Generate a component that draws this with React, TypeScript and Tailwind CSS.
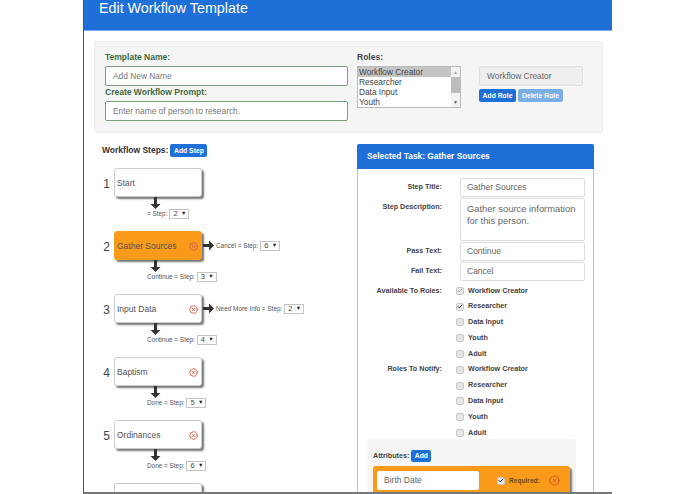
import { Check, CircleX } from 'lucide-react';

const font = { fontFamily: '"Liberation Sans", Arial, sans-serif' };

const steps = [
  { num: 1, title: 'Start', pass: '', passStep: 2 },
  { num: 2, title: 'Gather Sources', pass: 'Continue', passStep: 3, fail: 'Cancel', failStep: 6, active: true, removable: true },
  { num: 3, title: 'Input Data', pass: 'Continue', passStep: 4, fail: 'Need More Info', failStep: 2, removable: true },
  { num: 4, title: 'Baptism', pass: 'Done', passStep: 5, removable: true },
  { num: 5, title: 'Ordinances', pass: 'Done', passStep: 6, removable: true },
  { num: 6, title: '', pass: '', passStep: 0 },
];

function MiniSelect({ value }: { value: number }) {
  return (
    <span className="flex h-[10px] w-[20px] items-center justify-between border border-[#c4c4c4] bg-white pl-[3px] pr-[2px] text-[7.5px] leading-none text-[#444444]">
      {value}
      <span className="text-[5.5px] text-[#222222]">▼</span>
    </span>
  );
}

function ArrowDown() {
  return (
    <svg width="11" height="12" viewBox="0 0 11 12" className="block">
      <path d="M4 0h3v7h3.5L5.5 12 .5 7H4z" fill="#333333" />
    </svg>
  );
}

function ArrowRight() {
  return (
    <svg width="11" height="11" viewBox="0 0 11 11" className="block">
      <path d="M0 4h6V.5l5 5-5 5V7H0z" fill="#333333" />
    </svg>
  );
}

function Step({ step }: { step: (typeof steps)[number] }) {
  return (
    <div className="flex h-[63px] shrink-0">
      <div className="w-[12px] pr-[4px] pt-[10px] text-right text-[12px] leading-[12px] text-[#444444]">{step.num}</div>
      <div className="flex flex-col">
        <div className="flex items-center">
          <div
            className={`flex h-[29px] w-[88px] items-center justify-between rounded-[3px] border pl-[2px] pr-[3px] pt-[1px] text-[8.5px] text-[#555555] shadow-[2px_2px_2px_#777777] ${
              step.active ? 'border-[#f79a1e] bg-[#f99a1a]' : 'border-[#cccccc] bg-white'
            }`}
          >
            <span>{step.title}</span>
            {step.removable && <CircleX size={9} strokeWidth={2.5} className="text-[#d9604f]" />}
          </div>
          {step.fail && (
            <div className="ml-[1px] flex items-center gap-[2px]">
              <ArrowRight />
              <span className="text-[6.4px] text-[#555555]">{step.fail} = Step:</span>
              <MiniSelect value={step.failStep!} />
            </div>
          )}
        </div>
        {step.passStep > 0 && (
          <>
            <div className="ml-[36px]">
              <ArrowDown />
            </div>
            <div className="ml-[33px] flex items-center gap-[2px]">
              <span className="text-[6.4px] leading-[10px] text-[#555555]">{step.pass ? `${step.pass} = Step:` : '= Step:'}</span>
              <MiniSelect value={step.passStep} />
            </div>
          </>
        )}
      </div>
    </div>
  );
}

function Field({ label, value, area }: { label: string; value: string; area?: boolean }) {
  return (
    <div className="flex">
      <div className="w-[84px] pt-[4px] text-right text-[7.2px] font-bold text-[#444444]">{label}</div>
      <div
        className={`ml-[18px] w-[125px] rounded-[2px] border border-[#dddddd] bg-white px-[6px] text-[#666666] ${
          area ? 'h-[43px] pt-[4px] text-[9.4px] leading-[12px]' : 'h-[19px] text-[8.5px] leading-[17px]'
        }`}
      >
        {value}
      </div>
    </div>
  );
}

function Box({ checked, faded }: { checked?: boolean; faded?: boolean }) {
  return (
    <span className="flex h-[8px] w-[8px] shrink-0 items-center justify-center rounded-[2px] border border-[#c8c8c8] bg-[#e6e6e6]">
      {checked && <Check size={7} strokeWidth={4} className={faded ? 'text-[#aaaaaa]' : 'text-[#222222]'} />}
    </span>
  );
}

function CheckRow({ label, caption, checked, faded }: { label?: string; caption: string; checked?: boolean; faded?: boolean }) {
  return (
    <div className="flex h-[15.8px] items-center">
      <div className="w-[84px] text-right text-[7.2px] font-bold text-[#444444]">{label}</div>
      <span className="ml-[14px]">
        <Box checked={checked} faded={faded} />
      </span>
      <span className="ml-[4px] text-[7.2px] font-bold text-[#444444]">{caption}</span>
    </div>
  );
}

export default function App() {
  return (
    <div className="h-[494px] w-[695px] overflow-hidden bg-white" style={font}>
      <div className="ml-[83px] flex h-[494px] w-[529px] flex-col overflow-hidden border-b-2 border-l border-b-[#777777] border-l-[#44566b] bg-white">
        <div className="h-[31px] shrink-0 border-b border-[#79aee8] bg-[#1f6fd8] pl-[15px] text-[14.3px] leading-[16px] text-white">
          Edit Workflow Template
        </div>

        <div className="ml-[10px] mt-[10px] flex h-[92px] w-[509px] shrink-0 rounded-[2px] border border-[#eeeeee] bg-[#f5f5f5] pl-[10px] pt-[9px]">
          <div className="w-[243px]">
            <div className="text-[8.5px] font-bold leading-[12px] text-[#3f6b3f]">Template Name:</div>
            <div className="mt-[3px] h-[20px] rounded-[2px] border border-[#7d9c7d] bg-white pl-[7px] text-[8.4px] leading-[19px] text-[#777777]">
              Add New Name
            </div>
            <div className="text-[8.5px] font-bold leading-[13px] text-[#3f6b3f]">Create Workflow Prompt:</div>
            <div className="mt-[2px] h-[20px] rounded-[2px] border border-[#7d9c7d] bg-white pl-[7px] text-[8.4px] leading-[19px] text-[#777777]">
              Enter name of person to research.
            </div>
          </div>
          <div className="ml-[9px] w-[104px]">
            <div className="text-[8.5px] font-bold leading-[12px] text-[#444444]">Roles:</div>
            <div className="mt-[3px] flex h-[42px] border border-[#bbbbbb] bg-white text-[8.3px] leading-[10px] text-[#444444]">
              <div className="flex-1 overflow-hidden">
                <div className="bg-[#c4c4c4] pl-[1px]">Workflow Creator</div>
                <div className="pl-[1px]">Researcher</div>
                <div className="pl-[1px]">Data Input</div>
                <div className="pl-[1px]">Youth</div>
              </div>
              <div className="flex w-[9px] flex-col items-center bg-[#f2f2f2] text-[5px] leading-[10px] text-[#555555]">
                <span className="h-[10px] text-[#aaaaaa]">▲</span>
                <div className="h-[16px] w-full bg-[#bdbdbd]" />
                <span className="mt-auto">▼</span>
              </div>
            </div>
          </div>
          <div className="ml-[18px] mt-[15px] w-[104px]">
            <div className="h-[20px] rounded-[2px] border border-[#e0e0e0] bg-[#eeeeee] pl-[7px] text-[8.4px] leading-[19px] text-[#666666]">
              Workflow Creator
            </div>
            <div className="mt-[3px] flex gap-[2px]">
              <div className="h-[13px] w-[37px] rounded-[2px] bg-[#1f6fd8] text-center text-[6.8px] font-bold leading-[13px] text-white">Add Role</div>
              <div className="h-[13px] w-[45px] rounded-[2px] bg-[#79aee8] text-center text-[6.8px] font-bold leading-[13px] text-white">Delete Role</div>
            </div>
          </div>
        </div>

        <div className="flex min-h-0 flex-1">
          <div className="w-[273px] shrink-0 overflow-hidden pl-[18px] pt-[11px]">
            <div className="flex h-[13px] items-center">
              <span className="text-[8.5px] font-bold text-[#333333]">Workflow Steps:</span>
              <span className="ml-[2px] h-[13px] w-[37px] rounded-[2px] bg-[#1f6fd8] text-center text-[6.8px] font-bold leading-[13px] text-white">Add Step</span>
            </div>
            <div className="mt-[11px] flex flex-col">
              {steps.map((s) => (
                <Step key={s.num} step={s} />
              ))}
            </div>
          </div>

          <div className="mt-[11px] w-[237px] shrink-0 rounded-t-[2px] border-x border-[#a6c5ea]">
            <div className="-mx-px h-[25px] rounded-t-[2px] bg-[#1f6fd8] pl-[10px] text-[8.4px] font-bold leading-[25px] text-white">
              Selected Task: Gather Sources
            </div>
            <div className="flex flex-col gap-px pt-[9px]">
              <Field label="Step Title:" value="Gather Sources" />
              <Field label="Step Description:" value="Gather source information for this person." area />
              <Field label="Pass Text:" value="Continue" />
              <Field label="Fail Text:" value="Cancel" />
            </div>
            <div className="mt-[2px] flex flex-col">
              <CheckRow label="Available To Roles:" caption="Workflow Creator" checked faded />
              <CheckRow caption="Researcher" checked />
              <CheckRow caption="Data Input" />
              <CheckRow caption="Youth" />
              <CheckRow caption="Adult" />
              <CheckRow label="Roles To Notify:" caption="Workflow Creator" />
              <CheckRow caption="Researcher" />
              <CheckRow caption="Data Input" />
              <CheckRow caption="Youth" />
              <CheckRow caption="Adult" />
            </div>
            <div className="-mt-[2px] ml-[9px] h-[60px] w-[209px] rounded-[2px] bg-[#f5f5f5] pl-[6px] pt-[11px]">
              <div className="flex h-[12px] items-center">
                <span className="text-[7.2px] font-bold text-[#444444]">Attributes:</span>
                <span className="ml-[2px] h-[12px] w-[20px] rounded-[2px] bg-[#1f6fd8] text-center text-[6.8px] font-bold leading-[12px] text-white">Add</span>
              </div>
              <div className="mt-[4px] flex h-[30px] w-[197px] items-center rounded-[3px] bg-[#f99a1a] pl-[4px] shadow-[2px_2px_2px_#777777]">
                <div className="h-[19px] w-[102px] rounded-[2px] bg-white pl-[7px] text-[8.5px] leading-[19px] text-[#666666]">Birth Date</div>
                <span className="ml-[18px]">
                  <Box checked />
                </span>
                <span className="ml-[4px] text-[6.6px] font-bold text-[#6b4f1c]">Required:</span>
                <CircleX size={11} strokeWidth={2} className="ml-[9px] text-[#d9502f]" />
              </div>
            </div>
          </div>
        </div>
      </div>
    </div>
  );
}
